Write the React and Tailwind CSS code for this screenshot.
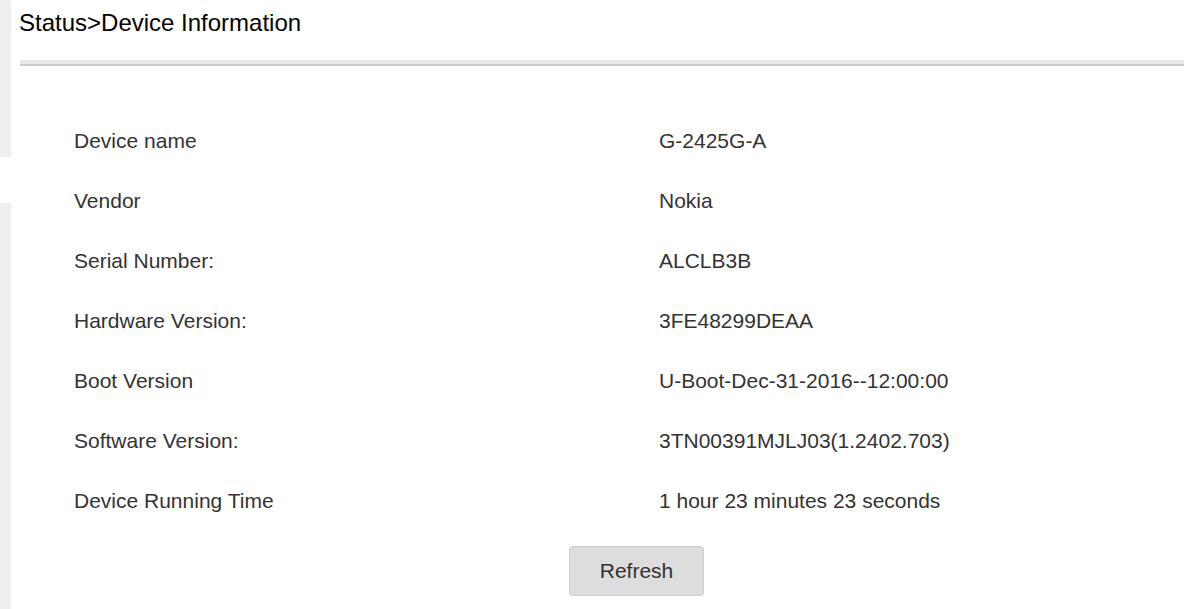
import React from 'react';

const deviceInfo = [
  { label: 'Device name', value: 'G-2425G-A' },
  { label: 'Vendor', value: 'Nokia' },
  { label: 'Serial Number:', value: 'ALCLB3B' },
  { label: 'Hardware Version:', value: '3FE48299DEAA' },
  { label: 'Boot Version', value: 'U-Boot-Dec-31-2016--12:00:00' },
  { label: 'Software Version:', value: '3TN00391MJLJ03(1.2402.703)' },
  { label: 'Device Running Time', value: '1 hour 23 minutes 23 seconds' },
];

const DeviceInformation = () => {
  return (
    <div className="flex min-h-screen bg-white font-['Liberation_Sans',Arial,sans-serif]">
      {/* sidebar edge */}
      <div className="flex w-[11px] shrink-0 flex-col">
        <div className="h-[157px] bg-[#eeeeee]" />
        <div className="h-[46px] bg-white" />
        <div className="flex-1 bg-[#eeeeee]" />
      </div>

      <div className="flex-1 pl-[8px]">
        <h1 className="pt-[9px] text-[24px] leading-[28px] font-normal text-black">
          Status&gt;Device Information
        </h1>
        <div className="mt-[23px] ml-[1px] h-[6px] border-b-2 border-[#cbcbcb] bg-[#e8e8e8]" />

        <div className="mt-[45px] pl-[55px]">
          <div className="grid grid-cols-[585px_1fr] text-[21px] leading-[60px] text-[#333333]">
            {deviceInfo.map((row) => (
              <React.Fragment key={row.label}>
                <div>{row.label}</div>
                <div>{row.value}</div>
              </React.Fragment>
            ))}
          </div>
          <button className="mt-[15px] ml-[495px] h-[50px] w-[135px] rounded-[4px] border border-[#cccccc] bg-[#dddddd] text-[21px] text-[#333333]">
            Refresh
          </button>
        </div>
      </div>
    </div>
  );
};

export default function App() {
  return <DeviceInformation />;
}
